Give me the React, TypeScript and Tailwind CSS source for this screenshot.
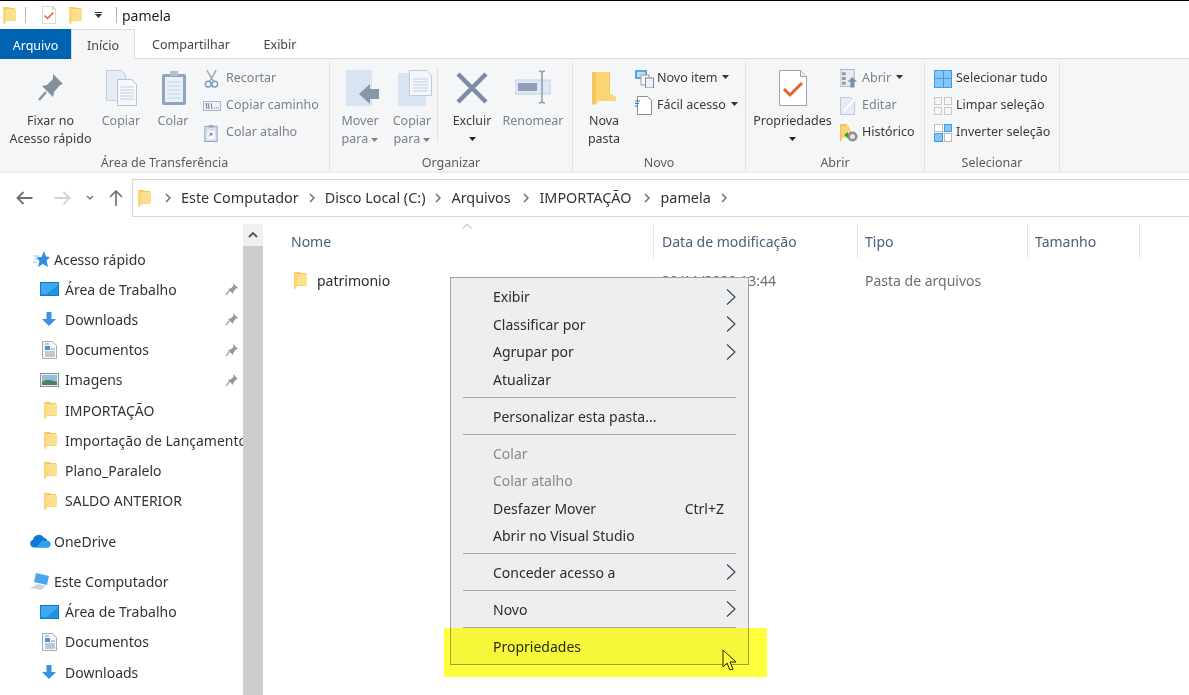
import React from "react";

const Folder = ({ className = "w-[13px] h-[18px]" }: { className?: string }) => (
  <svg viewBox="0 0 13 18" className={className}>
    <path d="M0 1h6l1 1h5v13H2.500l-.5 3-2-1z" fill="#f6c95c" />
    <path d="M2.500 3H13v11.500H2.500z" fill="#fde08f" />
    <path d="M0 1v16l2 1 .5-3V3z" fill="#fbd77a" />
  </svg>
);

const Pin = () => (
  <svg viewBox="0 0 14 14" className="w-[14px] h-[14px]">
    <path d="M8 1l5 5-2 .5-2.500 3-.5 2.500L3 7l2.500-.5 3-2.500z" fill="#8f9aa3" />
    <path d="M4.500 8.500L1 13" stroke="#a4adb4" strokeWidth="1.500" />
  </svg>
);

const Desktop = () => (
  <svg viewBox="0 0 19 14" className="w-[19px] h-[14px]">
    <rect x="0" y="0" width="19" height="14" fill="#0a7ed1" />
    <rect x="1" y="1" width="17" height="11.500" fill="#3fa9f0" />
    <path d="M18 3L6 12.500h12z" fill="#1f92e2" />
  </svg>
);

const Download = () => (
  <svg viewBox="0 0 16 16" className="w-[16px] h-[16px]">
    <path d="M5.500 1h5v7H15l-7 7-7-7h4.500z" fill="#3a92e4" />
  </svg>
);

const Docs = () => (
  <svg viewBox="0 0 15 18" className="w-[15px] h-[18px]">
    <path d="M.5.500h10l4 4v13H.5z" fill="#f7f8f9" stroke="#a7acb1" />
    <path d="M3 3h4M9 8h4M3 11h10M3 13h10M3 15h10" stroke="#8c97a3" />
    <path d="M3 5h5v4H3z" fill="#4b93d8" />
  </svg>
);

const Pictures = () => (
  <svg viewBox="0 0 19 14" className="w-[19px] h-[14px]">
    <rect x=".5" y=".5" width="18" height="13" fill="#e9eef3" stroke="#8e9499" />
    <rect x="2" y="2" width="15" height="10" fill="#8fc0e4" />
    <path d="M2 9c4-3 9-2 15 0v3H2z" fill="#4e7e66" />
  </svg>
);

const Chevron = () => (
  <svg viewBox="0 0 10 16" className="w-[10px] h-[16px]">
    <path d="M1 .5L9 8l-8 7.500" fill="none" stroke="#2b3f56" strokeWidth="1.100" />
  </svg>
);

const Caret = () => (
  <svg viewBox="0 0 7 4" className="inline-block w-[7px] h-[4px]">
    <path d="M0 0h7L3.500 4z" fill="currentColor" />
  </svg>
);

const BreadSep = () => (
  <svg viewBox="0 0 6 10" className="w-[6px] h-[10px] mx-[10px]">
    <path d="M1 1l4 4-4 4" fill="none" stroke="#6f6f6f" strokeWidth="1.500" />
  </svg>
);

const Props = ({ className }: { className: string }) => (
  <svg viewBox="0 0 28 36" className={className}>
    <path d="M.5.500h21l6 6v29H.5z" fill="#fff" stroke="#a3a3a3" />
    <path d="M21.500.500v6h6" fill="#eee" stroke="#a3a3a3" />
    <path d="M5 19l6 6 12-12" fill="none" stroke="#e8632b" strokeWidth="3" />
  </svg>
);

const LargeBtn = ({ w, icon, lines, muted, caret }: { w: string; icon: React.ReactNode; lines: React.ReactNode[]; muted?: boolean; caret?: boolean }) => (
  <div className={`${w} flex flex-col items-center shrink-0 ${muted ? "text-[#7c8187]" : "text-[#3a3a3a]"}`}>
    <div className="h-[44px] flex items-end justify-center">{icon}</div>
    <div className="mt-[6px] flex flex-col items-center leading-[18px]">
      {lines.map((l, i) => (
        <div key={i} className="h-[18px] whitespace-nowrap">{l}</div>
      ))}
      {caret && <div className="h-[18px] flex items-center text-[#222]"><Caret /></div>}
    </div>
  </div>
);

const SmallBtn = ({ icon, label, muted, caret }: { icon: React.ReactNode; label: string; muted?: boolean; caret?: boolean }) => (
  <div className={`h-[27px] flex items-center whitespace-nowrap ${muted ? "text-[#7c8187]" : "text-[#3a3a3a]"}`}>
    <div className="w-[22px] flex justify-start shrink-0">{icon}</div>
    <span>{label}</span>
    {caret && <span className="ml-[5px] mb-[3px] text-[#333]"><Caret /></span>}
  </div>
);

const Group = ({ w, label, children }: { w: string; label: string; children: React.ReactNode }) => (
  <div className={`${w} h-[109px] shrink-0 flex flex-col border-r border-[#e1e3e6]`}>
    <div className="h-[90px] shrink-0 flex">{children}</div>
    <div className="h-[19px] pt-[3px] shrink-0 flex items-center justify-center text-[#5c5c5c]">{label}</div>
  </div>
);

const NavRow = ({ icon, label, pin, top }: { icon: React.ReactNode; label: string; pin?: boolean; top?: boolean }) => (
  <div className={`h-[30.200px] flex items-center relative ${top ? "pl-[30px]" : "pl-[40px]"}`}>
    <div className={`${top ? "w-[24px]" : "w-[25px]"} flex justify-start shrink-0`}>{icon}</div>
    <span className="whitespace-nowrap overflow-hidden text-[#333]">{label}</span>
    {pin && <span className="absolute left-[225px] top-[8px]"><Pin /></span>}
  </div>
);

const NavFolder = ({ label }: { label: string }) => (
  <NavRow label={label} icon={<span className="pl-[4px] flex"><Folder /></span>} />
);

const MenuItem = ({ label, arrow, muted, shortcut }: { label: string; arrow?: boolean; muted?: boolean; shortcut?: string }) => (
  <div className={`h-[27.500px] pl-[42px] pr-[12px] flex items-center justify-between ${muted ? "text-[#8a8a8a]" : "text-[#2c2c2c]"}`}>
    <span>{label}</span>
    {arrow && <Chevron />}
    {shortcut && <span className="mr-[12px]">{shortcut}</span>}
  </div>
);

const MenuSep = () => <div className="h-px my-[4.200px] mx-[12px] bg-[#a8a8a8]" />;

export default function App() {
  return (
    <div className="relative w-[1189px] h-[695px] overflow-hidden bg-white border-t border-black text-[14px] font-['Noto_Sans',sans-serif]">
      {/* title bar */}
      <div className="h-[28px] flex items-center text-[#1e1e1e]">
        <div className="pl-[3px] w-[25px]"><Folder /></div>
        <div className="w-px h-[16px] bg-[#b5b5b5]" />
        <div className="ml-[16px]"><Props className="w-[14px] h-[18px]" /></div>
        <div className="ml-[13px]"><Folder /></div>
        <div className="ml-[13px] flex flex-col items-center gap-[1px]">
          <div className="w-[7px] h-px bg-[#333]" />
          <span className="text-[#333] flex"><Caret /></span>
        </div>
        <div className="ml-[14px] w-px h-[16px] bg-[#b5b5b5]" />
        <span className="ml-[5px]">pamela</span>
      </div>

      {/* tabs */}
      <div className="h-[30px] flex border-b border-[#dadbdc] text-[#444] text-[12.500px]">
        <div className="w-[71px] -mb-px pt-[4px] bg-[#0063b1] text-white flex items-center justify-center">Arquivo</div>
        <div className="w-[64px] -mb-px pt-[4px] bg-[#f5f6f7] border-x border-t border-[#dadbdc] flex items-center justify-center">Início</div>
        <div className="w-[112px] pt-[4px] flex items-center justify-center">Compartilhar</div>
        <div className="w-[66px] pt-[4px] flex items-center justify-center">Exibir</div>
      </div>

      {/* ribbon */}
      <div className="h-[114px] pt-[3px] flex bg-[#f5f6f7] border-b-2 border-[#eceded] text-[12.500px]">
        <Group w="w-[330px]" label="Área de Transferência">
          <LargeBtn w="w-[101px]" lines={["Fixar no", "Acesso rápido"]} icon={
            <svg viewBox="0 0 26 28" className="w-[26px] h-[28px] mb-[5px]">
              <path d="M15 1l10 10-3 1-6 7-1 5L4 13l5-1 6-6z" fill="#858f97" />
              <path d="M8 19L1 27" stroke="#8b959c" strokeWidth="2.500" />
            </svg>
          } />
          <LargeBtn w="w-[40px]" muted lines={["Copiar"]} icon={
            <svg viewBox="0 0 31 36" className="w-[31px] h-[36px] shrink-0">
              <path d="M.5.500h15l4 4v26H.5z" fill="#e6ecf5" stroke="#c3cfe0" />
              <path d="M11.500 9.500h14l5 5v21h-19z" fill="#f5f7fb" stroke="#b4c3d8" />
              <path d="M14 17h14M14 20h14M14 23h14M14 26h14M14 29h14" stroke="#c3cfe0" />
            </svg>
          } />
          <div className="w-[12px]" />
          <LargeBtn w="w-[40px]" muted lines={["Colar"]} icon={
            <svg viewBox="0 0 26 36" className="w-[26px] h-[36px] ml-[2px]">
              <rect x="1" y="4" width="24" height="31" rx="2" fill="#8fa2bf" />
              <rect x="4" y="7" width="18" height="25" fill="#eaf0f8" />
              <path d="M6 12h14M6 16h14M6 20h14M6 24h14M6 28h14" stroke="#c7d3e4" />
              <path d="M9 1h8v5H9z" fill="#b4bfce" />
            </svg>
          } />
          <div className="ml-[11px] flex flex-col pt-[3px]">
            <SmallBtn muted label="Recortar" icon={
              <svg viewBox="0 0 16 20" className="w-[15px] h-[19px]">
                <path d="M3 1l7 12M13 1L6 13" stroke="#9aa6b6" strokeWidth="1.500" />
                <circle cx="4.500" cy="16" r="3" fill="none" stroke="#7f9cc5" strokeWidth="1.500" />
                <circle cx="11.500" cy="16" r="3" fill="none" stroke="#7f9cc5" strokeWidth="1.500" />
              </svg>
            } />
            <SmallBtn muted label="Copiar caminho" icon={
              <svg viewBox="0 0 18 10" className="w-[18px] h-[10px] -ml-[1px]">
                <rect x=".5" y=".5" width="17" height="9" fill="#eef1f5" stroke="#a9b6c8" />
                <path d="M3 2l1 6M5 2l1 6M8 2l1 6M11 7h1M13 7h1M15 7h1" stroke="#6e7f96" />
              </svg>
            } />
            <SmallBtn muted label="Colar atalho" icon={
              <svg viewBox="0 0 14 19" className="w-[14px] h-[18px]">
                <rect x=".5" y="2.500" width="13" height="16" fill="#d6e0ee" stroke="#8fa2bf" />
                <rect x="3" y="7" width="8" height="9" fill="#f3f6fa" />
                <path d="M4.500 1h5v3h-5z" fill="#9fadc0" />
                <path d="M5 13l3-3M6 10h2v2" stroke="#53657d" fill="none" />
              </svg>
            } />
          </div>
        </Group>

        <Group w="w-[243px]" label="Organizar">
          <div className="w-[10px]" />
          <LargeBtn w="w-[40px]" muted lines={["Mover", <>para <Caret /></>]} icon={
            <svg viewBox="0 0 34 36" className="w-[34px] h-[36px] shrink-0 ml-[6px]">
              <rect x="0" y="0" width="26" height="36" fill="#d9e4f2" />
              <path d="M13 28l11-10v5h9v10h-9v5z" transform="translate(0 -4)" fill="#8996aa" />
            </svg>
          } />
          <div className="w-[12px]" />
          <LargeBtn w="w-[40px]" muted lines={["Copiar", <>para <Caret /></>]} icon={
            <svg viewBox="0 0 34 36" className="w-[34px] h-[36px] shrink-0 ml-[6px]">
              <rect x="0" y="3" width="28" height="33" fill="#d9e4f2" />
              <path d="M11.500.500h17l5 5v20h-22z" fill="#f3f6fb" stroke="#bccadc" />
              <path d="M15 9h15M15 12h15M15 15h15M15 18h15M15 21h15" stroke="#c3cfe0" />
            </svg>
          } />
          <div className="w-[10px] flex justify-center pt-[5px]"><div className="w-px h-[75px] bg-[#dfe1e4]" /></div>
          <div className="w-[9px]" />
          <LargeBtn w="w-[42px]" caret lines={["Excluir"]} icon={
            <svg viewBox="0 0 32 32" className="w-[32px] h-[32px] mb-[2px]">
              <path d="M2 2l28 28M30 2L2 30" stroke="#7d8ca6" strokeWidth="4.500" />
            </svg>
          } />
          <div className="w-[10px]" />
          <LargeBtn w="w-[60px]" muted lines={["Renomear"]} icon={
            <svg viewBox="0 0 36 34" className="w-[36px] h-[34px] mb-[2px]">
              <rect x="0" y="10" width="35" height="14" fill="#dfe8f4" stroke="#c2d0e2" />
              <rect x="3" y="13" width="19" height="8" fill="#8f9fb8" />
              <path d="M24 1c0 0 3 0 3 2v28c0 2-3 2-3 2M30 1c0 0-3 0-3 2v28c0 2 3 2 3 2" fill="none" stroke="#8d99aa" strokeWidth="1.500" />
            </svg>
          } />
        </Group>

        <Group w="w-[173px]" label="Novo">
          <LargeBtn w="w-[62px]" lines={["Nova", "pasta"]} icon={
            <svg viewBox="0 0 24 35" className="w-[24px] h-[35px]">
              <path d="M0 1h18v29L4 30l-1 4-3-1z" fill="#f4c55a" />
              <path d="M4 5l0 29 1-1 1-3h18V26l-7-4V1H4z" fill="#fbd574" />
            </svg>
          } />
          <div className="flex flex-col pt-[3px]">
            <SmallBtn caret label="Novo item" icon={
              <svg viewBox="0 0 19 18" className="w-[19px] h-[18px]">
                <rect x="0" y="0" width="12" height="9" fill="#5aa9e4" />
                <rect x="2" y="2" width="8" height="5" fill="#bfe0f7" />
                <rect x="6" y="5" width="8" height="10" fill="#f7f7f7" stroke="#9c9c9c" />
                <rect x="10.500" y="8" width="8" height="10" fill="#eaf2fb" stroke="#7f8b99" />
              </svg>
            } />
            <SmallBtn caret label="Fácil acesso" icon={
              <svg viewBox="0 0 17 19" className="w-[17px] h-[19px]">
                <path d="M2.500.500h10l4 4v14h-14z" fill="#fff" stroke="#8c8c8c" />
                <path d="M0 5h5M0 7.500h4M0 10h3" stroke="#2b7bc9" />
              </svg>
            } />
          </div>
        </Group>

        <Group w="w-[179px]" label="Abrir">
          <div className="w-[4px]" />
          <LargeBtn w="w-[85px]" caret lines={["Propriedades"]} icon={<Props className="w-[28px] h-[36px]" />} />
          <div className="ml-[5px] flex flex-col pt-[3px]">
            <SmallBtn muted caret label="Abrir" icon={
              <svg viewBox="0 0 18 19" className="w-[17px] h-[19px]">
                <rect x="0" y="0" width="15" height="18" fill="#e8ecf2" stroke="#a9b4c3" />
                <path d="M2 3h4v3H2zM2 8h4v3H2zM2 13h4v3H2z" fill="#8b99ae" />
                <path d="M13 8l5 5h-3v6h-4v-6H8z" fill="#7d90aa" />
              </svg>
            } />
            <SmallBtn muted label="Editar" icon={
              <svg viewBox="0 0 17 19" className="w-[16px] h-[18px]">
                <path d="M.5.500h11l4 4v14H.5z" fill="#e4ebf5" stroke="#b8c6d8" />
                <path d="M4 15L15 3" stroke="#fff" strokeWidth="2" />
              </svg>
            } />
            <SmallBtn label="Histórico" icon={
              <svg viewBox="0 0 18 19" className="w-[18px] h-[19px]">
                <path d="M0 1h7l1 14H2l-1 4-1-1z" fill="#f4c55a" />
                <path d="M2 3h7l2 6v6H2z" fill="#fbd574" />
                <circle cx="12.500" cy="13.500" r="5" fill="#8b8f92" />
                <circle cx="12.500" cy="13.500" r="2.500" fill="#e7e7e7" />
                <path d="M4 12l4-3v6z" fill="#2f9e44" />
              </svg>
            } />
          </div>
        </Group>

        <Group w="w-[135px]" label="Selecionar">
          <div className="flex flex-col pl-[9px] pt-[3px]">
            <SmallBtn label="Selecionar tudo" icon={
              <div className="w-[18px] h-[18px] grid grid-cols-2 gap-px bg-[#3f9be8] p-px">
                <div className="bg-[#86c6f7]" /><div className="bg-[#86c6f7]" /><div className="bg-[#86c6f7]" /><div className="bg-[#86c6f7]" />
              </div>
            } />
            <SmallBtn label="Limpar seleção" icon={
              <div className="w-[18px] h-[18px] grid grid-cols-2 gap-[2px]">
                <div className="border border-[#c9c9c9]" /><div className="border border-[#c9c9c9]" /><div className="border border-[#c9c9c9]" /><div className="border border-[#c9c9c9]" />
              </div>
            } />
            <SmallBtn label="Inverter seleção" icon={
              <div className="w-[18px] h-[18px] grid grid-cols-2 gap-[1px]">
                <div className="border border-[#bdbdbd] bg-white" /><div className="border border-[#3f9be8] bg-[#86c6f7]" /><div className="border border-[#3f9be8] bg-[#86c6f7]" /><div className="border border-[#bdbdbd] bg-white" />
              </div>
            } />
          </div>
        </Group>
      </div>

      {/* address bar */}
      <div className="h-[38px] mt-[6px] flex">
        <div className="w-[132px] shrink-0 flex items-center pl-[16px]">
          <svg viewBox="0 0 16 14" className="w-[17px] h-[14px]">
            <path d="M7 1L1 7l6 6M1 7h15" fill="none" stroke="#6e6e6e" strokeWidth="1.800" />
          </svg>
          <svg viewBox="0 0 16 14" className="w-[17px] h-[14px] ml-[21px]">
            <path d="M9 1l6 6-6 6M15 7H0" fill="none" stroke="#d4d4d4" strokeWidth="1.800" />
          </svg>
          <svg viewBox="0 0 8 6" className="w-[8px] h-[6px] ml-[15px]">
            <path d="M1 1l3 3 3-3" fill="none" stroke="#7a7a7a" strokeWidth="1.500" />
          </svg>
          <svg viewBox="0 0 14 16" className="w-[14px] h-[16px] ml-[15px]">
            <path d="M1 7l6-6 6 6M7 1v15" fill="none" stroke="#6e6e6e" strokeWidth="1.600" />
          </svg>
        </div>
        <div className="flex-1 flex items-center border-y border-l border-[#d9d9d9] pl-[5px] text-[#333] text-[14.400px]">
          <Folder />
          <span className="ml-[4px] flex items-center"><BreadSep /></span>
          <span>Este Computador</span><BreadSep />
          <span>Disco Local (C:)</span><BreadSep />
          <span className="w-[62px]">Arquivos</span><BreadSep />
          <span className="w-[95px]">IMPORTAÇÃO</span><BreadSep />
          <span>pamela</span><BreadSep />
        </div>
      </div>

      {/* body */}
      <div className="h-[471px] mt-[7px] flex">
        <div className="w-[243px] shrink-0 overflow-hidden pt-[20px]">
          <NavRow top label="Acesso rápido" icon={
            <svg viewBox="0 0 17 16" className="w-[17px] h-[16px] ml-[3px]">
              <path d="M11 0l2 5.500 4 .5-3.500 3.500L15 16l-5-3-5 3 1.500-6L3 6.500 8.500 6z" fill="#2f8fe6" />
              <path d="M0 5h6M1 8h3M0 11h4" stroke="#9ccbf5" />
            </svg>
          } />
          <NavRow pin label="Área de Trabalho" icon={<Desktop />} />
          <NavRow pin label="Downloads" icon={<span className="pl-[1px] flex"><Download /></span>} />
          <NavRow pin label="Documentos" icon={<span className="pl-[2px] flex"><Docs /></span>} />
          <NavRow pin label="Imagens" icon={<Pictures />} />
          <NavFolder label="IMPORTAÇÃO" />
          <NavFolder label="Importação de Lançamentos" />
          <NavFolder label="Plano_Paralelo" />
          <NavFolder label="SALDO ANTERIOR" />
          <div className="h-[10.500px]" />
          <NavRow top label="OneDrive" icon={
            <svg viewBox="0 0 21 14" className="w-[21px] h-[14px]">
              <path d="M4 13.500a4 4 0 0 1-1-7.800 6 6 0 0 1 11-2 4.500 4.500 0 0 1 3.500 3.300 3.300 3.300 0 0 1 .5 6.500z" fill="#0f78d4" />
              <path d="M6 13.500L12 7l5.500 0 2 1.500.5 3-1.500 2z" fill="#2ba4ef" />
            </svg>
          } />
          <div className="h-[10px]" />
          <NavRow top label="Este Computador" icon={
            <svg viewBox="0 0 20 17" className="w-[20px] h-[17px]">
              <path d="M6 0l13 3-2 9-13-3z" fill="#49a8ec" />
              <path d="M0 15l8-4 8 2-5 4z" fill="#cfd6dc" />
            </svg>
          } />
          <NavRow label="Área de Trabalho" icon={<Desktop />} />
          <NavRow label="Documentos" icon={<span className="pl-[2px] flex"><Docs /></span>} />
          <NavRow label="Downloads" icon={<span className="pl-[1px] flex"><Download /></span>} />
        </div>

        {/* nav scrollbar */}
        <div className="w-[20px] shrink-0 flex flex-col bg-[#cdcdcd]">
          <div className="h-[22px] bg-[#f0f0f0] flex items-center justify-center">
            <svg viewBox="0 0 10 6" className="w-[10px] h-[6px]">
              <path d="M1 5l4-4 4 4" fill="none" stroke="#505050" strokeWidth="1.800" />
            </svg>
          </div>
        </div>

        {/* file list */}
        <div className="flex-1 relative text-[#5f6b7c]">
          <svg viewBox="0 0 10 5" className="absolute left-[199px] top-[0px] w-[10px] h-[5px]">
            <path d="M.5 4.500L5 .5l4.500 4" fill="none" stroke="#a2a2a2" />
          </svg>
          <div className="h-[34px] flex items-center text-[#4c607a]">
            <div className="w-[390px] pl-[28px]">Nome</div>
            <div className="w-[204px] h-full border-l border-[#e5e5e5] pl-[8px] flex items-center">Data de modificação</div>
            <div className="w-[170px] h-full border-l border-[#e5e5e5] pl-[7px] flex items-center">Tipo</div>
            <div className="w-[113px] h-full border-x border-[#e5e5e5] pl-[7px] flex items-center">Tamanho</div>
          </div>
          <div className="h-[30px] mt-[7px] flex items-center">
            <div className="w-[390px] pl-[31px] flex items-center text-[#2c2c2c]">
              <Folder />
              <span className="ml-[10px]">patrimonio</span>
            </div>
            <div className="w-[204px] pl-[9px] text-[#6d6d6d]">30/11/2020 13:44</div>
            <div className="w-[170px] pl-[8px] text-[#6d6d6d]">Pasta de arquivos</div>
          </div>
        </div>
      </div>

      {/* context menu */}
      <div className="absolute left-[450px] top-[276px] w-[299px] h-[388px] pt-[5px] flex flex-col bg-[#eeeeee] border border-[#a0a0a0]">
        <MenuItem label="Exibir" arrow />
        <MenuItem label="Classificar por" arrow />
        <MenuItem label="Agrupar por" arrow />
        <MenuItem label="Atualizar" />
        <MenuSep />
        <MenuItem label="Personalizar esta pasta..." />
        <MenuSep />
        <MenuItem muted label="Colar" />
        <MenuItem muted label="Colar atalho" />
        <MenuItem label="Desfazer Mover" shortcut="Ctrl+Z" />
        <MenuItem label="Abrir no Visual Studio" />
        <MenuSep />
        <MenuItem label="Conceder acesso a" arrow />
        <MenuSep />
        <MenuItem label="Novo" arrow />
        <div className="h-px mt-[4.200px] mx-[12px] bg-[#a8a8a8]" />
        {/* lighter so the band under the highlight stays bright */}
        <div className="flex-1 pt-[5px] bg-[#f6f6f6]">
          <MenuItem label="Propriedades" />
        </div>
      </div>

      {/* mouse cursor */}
      <svg viewBox="0 0 16 23" className="absolute left-[722px] top-[648px] w-[16px] h-[23px]">
        <path d="M1 1v17l4-4 3 7 3-1-3-7h6z" fill="#fff" stroke="#222" />
      </svg>

      {/* yellow highlight */}
      <div className="absolute left-[444px] top-[627px] w-[323px] h-[49px] bg-[#ffff3c] mix-blend-multiply" />
    </div>
  );
}
